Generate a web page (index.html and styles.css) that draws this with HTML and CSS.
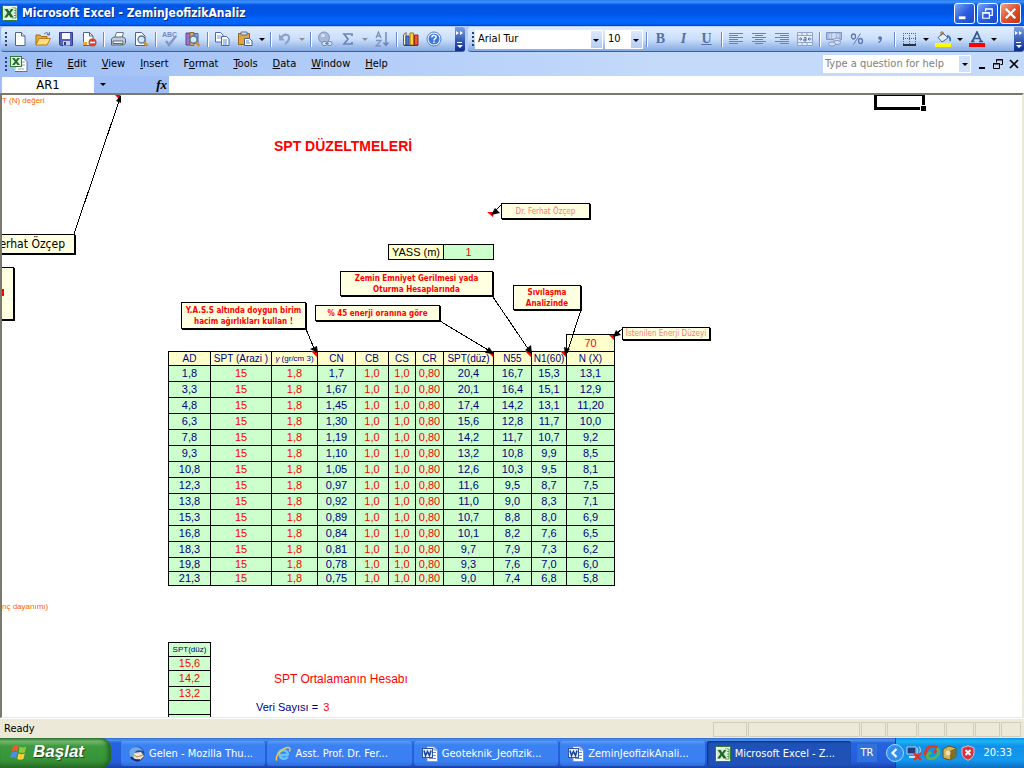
FILE: index.html
```html
<!DOCTYPE html>
<html lang="tr">
<head>
<meta charset="utf-8">
<title>Microsoft Excel - ZeminJeofizikAnaliz</title>
<link rel="stylesheet" href="styles.css">
</head>
<body>
<svg class="defs" aria-hidden="true">
  <symbol id="excel" viewBox="0 0 16 16"><rect x=".5" y=".5" width="15" height="15" rx="1" fill="#eef6ea" stroke="#2f7d32"/><path d="M10 3h4v10h-4z" fill="#fff" stroke="#4b9a4b"/><path d="M10 5.5h4M10 8h4M10 10.500h4" stroke="#4b9a4b"/><rect x="2" y="3" width="10" height="10" fill="#d6ecd0"/><path d="M2.500 4h3.200l1.600 2.400L9 4h2.500L8.600 8l3.200 4.500H8.500L6.800 9.800 5 12.500H2.200L5.400 8z" fill="#1d6b2a"/></symbol>
  <symbol id="word" viewBox="0 0 16 16"><path d="M5 .5h7l3.500 3.500v11.500H5z" fill="#fff" stroke="#7d93c4"/><path d="M12 .5V4h3.500M11 6.500h3M11 9.500h3M7 12.500h7" stroke="#6f8fd0" fill="none"/><rect x=".5" y="2.500" width="10" height="9" fill="#e7effc" stroke="#2d56a8"/><path d="M2 4.500l1.500 5 2-4 2 4 1.500-5" fill="none" stroke="#1f4598" stroke-width="1.600"/></symbol>
  <symbol id="lens" viewBox="0 0 16 16"><circle cx="8.500" cy="8.500" r="3.500" fill="#cfeafd" stroke="#5f7795" stroke-width="1.300"/><path d="M11 11.300l3.500 3.500" stroke="#d58a2c" stroke-width="2.400"/></symbol>
</svg>
<div class="app">
  <header class="titlebar">
    <svg class="i16"><use href="#excel"/></svg>
    <h1 class="caption">Microsoft Excel - ZeminJeofizikAnaliz</h1>
    <div class="winbtns">
      <button class="winbtn" aria-label="Minimize"><svg viewBox="0 0 20 20"><path d="M4 13h7v3H4z" fill="#fff"/></svg></button>
      <button class="winbtn" aria-label="Restore"><svg viewBox="0 0 20 20"><path d="M8 8V5h7v7h-3M8 5.500h7M5 9h7v6H5zM5 9.500h7" fill="none" stroke="#fff" stroke-width="1.300"/></svg></button>
      <button class="winbtn close" aria-label="Close"><svg viewBox="0 0 20 20"><path d="M5 5l10 10M15 5L5 15" stroke="#fff" stroke-width="2.400"/></svg></button>
    </div>
  </header>

  <div class="toolbars">
    <div class="toolbar">
      <span class="grip"></span>
      <button class="tb" aria-label="New"><svg viewBox="0 0 16 16"><path d="M3.500 1.500h6l3.500 3.500v9.500H3.500z" fill="#fff" stroke="#51658c"/><path d="M9.500 1.500V5H13" fill="#dbe6f6" stroke="#51658c"/></svg></button>
      <button class="tb" aria-label="Open"><svg viewBox="0 0 16 16"><path d="M1 14V4h4l1.500 1.500H12V8" fill="#e8a93a" stroke="#a36a10"/><path d="M1 14L4 7.500h11.500L12 14z" fill="#ffdc7c" stroke="#b77d1a"/><path d="M9 3c2-2 4-1.500 5 .8M14.500 1.200l-.3 3-2.400-1" fill="none" stroke="#4b6a9c"/></svg></button>
      <button class="tb" aria-label="Save"><svg viewBox="0 0 16 16"><path d="M1.500 1.500h13v13h-12l-1-1z" fill="#5561bd" stroke="#333c93"/><path d="M4 2h8v6H4z" fill="#f7f9ff"/><path d="M5 10h7v4.500H5z" fill="#c8cdea"/><path d="M6 11h2v3H6z" fill="#303a8a"/></svg></button>
      <button class="tb" aria-label="Permission"><svg viewBox="0 0 16 16"><path d="M2.500 1.500h6l3.500 3.500v9.500H2.500z" fill="#fff" stroke="#51658c"/><path d="M8.500 1.500V5H12" fill="none" stroke="#51658c"/><path d="M2 11h4v3H2z" fill="#f4a42c"/><circle cx="11.500" cy="11.500" r="4" fill="#dd4328"/><path d="M9 11.500h5" stroke="#fff" stroke-width="1.600"/></svg></button>
      <span class="sep"></span>
      <button class="tb" aria-label="Print"><svg viewBox="0 0 16 16"><path d="M5 6l1.500-4.500h7L12 7" fill="#fff" stroke="#66758f"/><path d="M1.500 8l2-2h10l2 2v4l-2 2h-12z" fill="#c4ccd8" stroke="#56657f"/><path d="M3 10h10v2.500H3z" fill="#f5f8fb" stroke="#56657f"/><path d="M11 12h2v2h-2z" fill="#37a234"/></svg></button>
      <button class="tb" aria-label="Print Preview"><svg viewBox="0 0 16 16"><path d="M2.500 1.500h6L12 5v9.500H2.500z" fill="#fff" stroke="#51658c"/><use href="#lens"/></svg></button>
      <span class="sep"></span>
      <button class="tb" aria-label="Spelling"><svg viewBox="0 0 16 16"><text x="0" y="6" class="icontext">ABC</text><path d="M4 10l3 4 7-9" fill="none" stroke="#8198c4" stroke-width="2.400"/></svg></button>
      <button class="tb" aria-label="Research"><svg viewBox="0 0 16 16"><path d="M1 2h4v12H1z" fill="#9c75bf" stroke="#65468c"/><path d="M5 1.500h4v13H5z" fill="#d3b07a" stroke="#8c6a35"/><path d="M9 2.500h4v10H9z" fill="#87a5e0" stroke="#4a64a4"/><use href="#lens"/></svg></button>
      <span class="sep"></span>
      <button class="tb" aria-label="Copy"><svg viewBox="0 0 16 16"><path d="M1.500 1.500h5L9 4v7H1.500z" fill="#fff" stroke="#4c69a8"/><path d="M3 5h4M3 7h4" stroke="#7a98d6"/><path d="M7.500 5.500h5L15 8v6.500H7.500z" fill="#fff" stroke="#4c69a8"/><path d="M9 9h4M9 11h4M9 13h4" stroke="#5e84d0"/></svg></button>
      <button class="tb" aria-label="Paste"><svg viewBox="0 0 16 16"><path d="M1.500 2.500h11v11h-11z" fill="#e6a53a" stroke="#94651a"/><path d="M4 1h6v3H4z" fill="#d7dbe4" stroke="#66758f"/><path d="M7.500 7.500h5L15 10v4.500H7.500z" fill="#fff" stroke="#4c5f8c"/><path d="M9 10h3M9 12h4" stroke="#5e84d0"/></svg></button>
      <button class="drop" aria-label="Paste options"></button>
      <span class="sep"></span>
      <button class="tb" aria-label="Undo"><svg viewBox="0 0 16 16"><path d="M4 7c3-5 9-4 8 1-.4 2-2 3.500-4 5" fill="none" stroke="#8ba2cf" stroke-width="2.200"/><path d="M2 3v6.500h6z" fill="#8ba2cf"/></svg></button>
      <button class="drop dim" aria-label="Undo list"></button>
      <span class="sep"></span>
      <button class="tb" aria-label="Insert Hyperlink"><svg viewBox="0 0 16 16"><circle cx="7" cy="6.500" r="5.500" fill="#a5b8da" stroke="#7f95be"/><path d="M4 3.500c2-1.500 4-1 4 1s-3 2-4 1z" fill="#d5e0f2"/><rect x="5" y="10.500" width="5" height="4" rx="2" fill="#dce6f7" stroke="#7488b0"/><rect x="10" y="10.500" width="5" height="4" rx="2" fill="#dce6f7" stroke="#7488b0"/><path d="M8 12.500h4" stroke="#7488b0"/></svg></button>
      <button class="tb" aria-label="AutoSum"><svg viewBox="0 0 16 16"><path d="M12 5V3H4l4 5-4 5h8v-2" fill="none" stroke="#6b84b8" stroke-width="1.700"/></svg></button>
      <button class="drop dim" aria-label="AutoSum options"></button>
      <button class="tb" aria-label="Sort Ascending"><svg viewBox="0 0 16 16"><path d="M2 7l2.500-6L7 7M3 5h3M2 9.500h5L2 15h5" fill="none" stroke="#7f95c0" stroke-width="1.300"/><path d="M12 1v13M9.500 11.500L12 14.500l2.500-3" fill="none" stroke="#6b84b8" stroke-width="1.400"/></svg></button>
      <span class="sep"></span>
      <button class="tb" aria-label="Chart Wizard"><svg viewBox="0 0 16 16"><path d="M.5 4L3 1.500V14H.5z" fill="#f9f0d0" stroke="#765d2a"/><path d="M3 5h3v9H3z" fill="#4a7dd8" stroke="#264b94"/><path d="M7 2h3.500v12H7z" fill="#ffd23b" stroke="#a37300"/><path d="M11.500 4H15v10h-3.500z" fill="#e65a38" stroke="#9c2a12"/><path d="M1 14.500h14" stroke="#444"/></svg></button>
      <button class="tb" aria-label="Help"><svg viewBox="0 0 16 16"><circle cx="8" cy="8" r="7" fill="#fff" stroke="#4b78c8"/><circle cx="8" cy="8" r="5.500" fill="#3d78dc"/><path d="M5.800 6.500c0-3 4.600-2.600 4.300-.2C10 7.800 8 7.700 8 9.500M8 10.500v1.500" fill="none" stroke="#fff" stroke-width="1.500"/></svg></button>
      <span class="fill"></span>
      <button class="more" aria-label="Toolbar Options"><svg viewBox="0 0 10 24"><path d="M1 4l3 2-3 2zM5 4l3 2-3 2z" fill="#fff"/><path d="M2 15h5v1H2zM2 18h6l-3 3z" fill="#fff"/></svg></button>
    </div>
    <div class="toolbar wide">
      <span class="grip"></span>
      <label class="combo font"><select aria-label="Font"><option>Arial Tur</option></select></label>
      <label class="combo size"><select aria-label="Font Size"><option>10</option></select></label>
      <span class="sep"></span>
      <button class="tb letter"><b>B</b></button>
      <button class="tb letter"><b><i>I</i></b></button>
      <button class="tb letter"><b><u>U</u></b></button>
      <span class="sep"></span>
      <button class="tb" aria-label="Align Left"><svg viewBox="0 0 16 16"><path d="M1 2.500h14M1 4.500h9M1 6.500h14M1 8.500h9M1 10.500h14M1 12.500h9" stroke="#6a82b4"/></svg></button>
      <button class="tb" aria-label="Center"><svg viewBox="0 0 16 16"><path d="M1 2.500h14M4 4.500h8M1 6.500h14M4 8.500h8M1 10.500h14M4 12.500h8" stroke="#6a82b4"/></svg></button>
      <button class="tb" aria-label="Align Right"><svg viewBox="0 0 16 16"><path d="M1 2.500h14M6 4.500h9M1 6.500h14M6 8.500h9M1 10.500h14M6 12.500h9" stroke="#6a82b4"/></svg></button>
      <button class="tb" aria-label="Merge and Center"><svg viewBox="0 0 16 16"><path d="M.5 1.500h15v13H.5zM.5 4.500h15M.5 11.500h15M5 1.500v3M10 1.500v3M5 11.500v3M10 11.500v3" fill="#e5edfa" stroke="#8ea5d0"/><path d="M1.500 8h3M3.500 6.500L5 8 3.500 9.500M14.500 8h-3M12.500 6.500L11 8l1.500 1.500M7 6.500h2v3.500H6.800V8.300H9" fill="none" stroke="#546fa8"/></svg></button>
      <span class="sep"></span>
      <button class="tb" aria-label="Currency"><svg viewBox="0 0 16 16"><path d="M.5 1.500h15v7H.5z" fill="#a9bbdd" stroke="#8096c2"/><path d="M4 3v4M7 3h2v4H7zM12 3v4" fill="none" stroke="#e8effa"/><ellipse cx="11" cy="9" rx="3.500" ry="2" fill="#d7e0f1" stroke="#8096c2"/><ellipse cx="11" cy="11.500" rx="3.500" ry="2" fill="#d7e0f1" stroke="#8096c2"/><ellipse cx="6" cy="13" rx="3.500" ry="2" fill="#d7e0f1" stroke="#8096c2"/></svg></button>
      <button class="tb" aria-label="Percent"><svg viewBox="0 0 16 16"><ellipse cx="4.500" cy="5.500" rx="2" ry="2.500" fill="none" stroke="#5d78b0" stroke-width="1.300"/><ellipse cx="11.500" cy="10" rx="2" ry="2.500" fill="none" stroke="#5d78b0" stroke-width="1.300"/><path d="M11.500 2.500l-7 11" stroke="#5d78b0"/></svg></button>
      <button class="tb" aria-label="Comma"><svg viewBox="0 0 16 16"><circle cx="8" cy="7" r="1.800" fill="#5570a8"/><path d="M9 7c.5 2-.5 3.500-2.500 4.500" fill="none" stroke="#5570a8" stroke-width="1.300"/></svg></button>
      <span class="sep"></span>
      <button class="tb" aria-label="Borders"><svg viewBox="0 0 16 16"><path d="M2.500 2v11M8.500 2v11M14.500 2v11M2 2.500h13M2 7.500h13" stroke="#4d6798" stroke-dasharray="1 1"/><path d="M2 14h13" stroke="#000" stroke-width="1.600"/></svg></button>
      <button class="drop" aria-label="Border styles"></button>
      <button class="tb" aria-label="Fill Color"><svg viewBox="0 0 16 16"><path d="M3 6.500L8 2l5 5-6 4z" fill="#e4eefb" stroke="#48638f"/><path d="M6 5V1h2v3" fill="none" stroke="#8b6a3c"/><path d="M12 5c3 0 3.500 3 3 5" fill="none" stroke="#3d6fc4" stroke-width="1.800"/><path d="M0 12h16v4H0z" fill="#ffff00"/></svg></button>
      <button class="drop" aria-label="Fill colors"></button>
      <button class="tb" aria-label="Font Color"><svg viewBox="0 0 16 16"><path d="M3 11L8 1l4.500 10M5 7.500h5.500M2 10.500h3.500M10 10.500h4" fill="none" stroke="#39568f" stroke-width="1.700"/><path d="M0 12h16v4H0z" fill="#ff0000"/></svg></button>
      <button class="drop" aria-label="Font colors"></button>
      <span class="fill"></span>
      <button class="more" aria-label="Toolbar Options"><svg viewBox="0 0 10 24"><path d="M1 4l3 2-3 2zM5 4l3 2-3 2z" fill="#fff"/><path d="M2 15h5v1H2zM2 18h6l-3 3z" fill="#fff"/></svg></button>
    </div>
  </div>

  <nav class="menubar">
    <span class="grip"></span>
    <svg class="bookicon" viewBox="0 0 18 16"><path d="M8 2.500h6l3 3v10H5" fill="#fff" stroke="#5b6f99"/><path d="M12 6h3M12 9h3M8 13h6" stroke="#8c9dbf"/><rect x=".5" y=".5" width="11" height="10" fill="#e3f3dd" stroke="#2f7d32"/><path d="M2 2h2.500L6 4l1.500-2H10L7.200 5.500 10 9H7.500L6 7 4.500 9H2l2.800-3.500z" fill="#1d6b2a"/></svg>
    <button class="menu"><u>F</u>ile</button>
    <button class="menu"><u>E</u>dit</button>
    <button class="menu"><u>V</u>iew</button>
    <button class="menu"><u>I</u>nsert</button>
    <button class="menu">F<u>o</u>rmat</button>
    <button class="menu"><u>T</u>ools</button>
    <button class="menu"><u>D</u>ata</button>
    <button class="menu"><u>W</u>indow</button>
    <button class="menu"><u>H</u>elp</button>
    <span class="fill"></span>
    <label class="question"><input type="text" placeholder="Type a question for help" aria-label="Type a question for help"><button class="drop qdrop" aria-label="Recent questions"></button></label>
    <button class="docbtn" aria-label="Minimize workbook"><svg viewBox="0 0 12 12"><path d="M3 9h6v2H3z"/></svg></button>
    <button class="docbtn" aria-label="Restore workbook"><svg viewBox="0 0 12 12"><path d="M4.500 4.500v-3h6v5h-2M4 2h7M1.500 5.500h6v5h-6zM1 6h7" fill="none" stroke="#000"/></svg></button>
    <button class="docbtn" aria-label="Close workbook"><svg viewBox="0 0 12 12"><path d="M2 2l8 8M10 2l-8 8" stroke="#000" stroke-width="1.700"/></svg></button>
  </nav>

  <div class="formulabar">
    <input class="namebox" type="text" value="AR1" aria-label="Name Box">
    <button class="drop namedrop" aria-label="Names"></button>
    <button class="fx" aria-label="Insert Function"><i>fx</i></button>
    <input class="formula" type="text" aria-label="Formula">
  </div>

  <main class="sheet">
    <h2 class="heading">SPT DÜZELTMELERİ</h2>
    <table class="grid yass"><tr><th>YASS (m)</th><td class="r">1</td></tr></table>
    <table class="grid main">
      <colgroup><col class="c42"><col class="c61"><col class="c46"><col class="c38"><col class="c33"><col class="c27"><col class="c28"><col class="c50"><col class="c38"><col class="c35"><col class="c48"></colgroup>
      <thead>
        <tr class="energy"><td class="none" colspan="10"></td><th class="r">70</th></tr>
        <tr class="short head"><th>AD</th><th>SPT (Arazi )</th><th class="small"><i>γ</i> (gr/cm 3)</th><th>CN</th><th>CB</th><th>CS</th><th>CR</th><th>SPT(düz)</th><th>N55</th><th>N1(60)</th><th>N (X)</th></tr>
      </thead>
      <tbody>
        <tr><td>1,8</td><td class="r">15</td><td class="r">1,8</td><td>1,7</td><td class="r">1,0</td><td class="r">1,0</td><td class="r">0,80</td><td>20,4</td><td>16,7</td><td>15,3</td><td>13,1</td></tr>
        <tr><td>3,3</td><td class="r">15</td><td class="r">1,8</td><td>1,67</td><td class="r">1,0</td><td class="r">1,0</td><td class="r">0,80</td><td>20,1</td><td>16,4</td><td>15,1</td><td>12,9</td></tr>
        <tr><td>4,8</td><td class="r">15</td><td class="r">1,8</td><td>1,45</td><td class="r">1,0</td><td class="r">1,0</td><td class="r">0,80</td><td>17,4</td><td>14,2</td><td>13,1</td><td>11,20</td></tr>
        <tr><td>6,3</td><td class="r">15</td><td class="r">1,8</td><td>1,30</td><td class="r">1,0</td><td class="r">1,0</td><td class="r">0,80</td><td>15,6</td><td>12,8</td><td>11,7</td><td>10,0</td></tr>
        <tr><td>7,8</td><td class="r">15</td><td class="r">1,8</td><td>1,19</td><td class="r">1,0</td><td class="r">1,0</td><td class="r">0,80</td><td>14,2</td><td>11,7</td><td>10,7</td><td>9,2</td></tr>
        <tr><td>9,3</td><td class="r">15</td><td class="r">1,8</td><td>1,10</td><td class="r">1,0</td><td class="r">1,0</td><td class="r">0,80</td><td>13,2</td><td>10,8</td><td>9,9</td><td>8,5</td></tr>
        <tr><td>10,8</td><td class="r">15</td><td class="r">1,8</td><td>1,05</td><td class="r">1,0</td><td class="r">1,0</td><td class="r">0,80</td><td>12,6</td><td>10,3</td><td>9,5</td><td>8,1</td></tr>
        <tr><td>12,3</td><td class="r">15</td><td class="r">1,8</td><td>0,97</td><td class="r">1,0</td><td class="r">1,0</td><td class="r">0,80</td><td>11,6</td><td>9,5</td><td>8,7</td><td>7,5</td></tr>
        <tr><td>13,8</td><td class="r">15</td><td class="r">1,8</td><td>0,92</td><td class="r">1,0</td><td class="r">1,0</td><td class="r">0,80</td><td>11,0</td><td>9,0</td><td>8,3</td><td>7,1</td></tr>
        <tr><td>15,3</td><td class="r">15</td><td class="r">1,8</td><td>0,89</td><td class="r">1,0</td><td class="r">1,0</td><td class="r">0,80</td><td>10,7</td><td>8,8</td><td>8,0</td><td>6,9</td></tr>
        <tr><td>16,8</td><td class="r">15</td><td class="r">1,8</td><td>0,84</td><td class="r">1,0</td><td class="r">1,0</td><td class="r">0,80</td><td>10,1</td><td>8,2</td><td>7,6</td><td>6,5</td></tr>
        <tr><td>18,3</td><td class="r">15</td><td class="r">1,8</td><td>0,81</td><td class="r">1,0</td><td class="r">1,0</td><td class="r">0,80</td><td>9,7</td><td>7,9</td><td>7,3</td><td>6,2</td></tr>
        <tr class="short"><td>19,8</td><td class="r">15</td><td class="r">1,8</td><td>0,78</td><td class="r">1,0</td><td class="r">1,0</td><td class="r">0,80</td><td>9,3</td><td>7,6</td><td>7,0</td><td>6,0</td></tr>
        <tr class="short"><td>21,3</td><td class="r">15</td><td class="r">1,8</td><td>0,75</td><td class="r">1,0</td><td class="r">1,0</td><td class="r">0,80</td><td>9,0</td><td>7,4</td><td>6,8</td><td>5,8</td></tr>
      </tbody>
    </table>
    <section class="average">
      <table class="grid avg">
        <tr class="short"><th class="small">SPT(düz)</th></tr>
        <tr class="short"><td class="r">15,6</td></tr>
        <tr><td class="r">14,2</td></tr>
        <tr class="short"><td class="r">13,2</td></tr>
        <tr class="short"><td></td></tr>
        <tr class="short"><td></td></tr>
      </table>
      <div class="avgtext">
        <h3 class="subheading">SPT Ortalamanın Hesabı</h3>
        <p class="count">Veri Sayısı = <span class="r">3</span></p>
      </div>
    </section>

    <span class="cut cut-n">T (N) değeri</span>
    <span class="cut cut-d">nç dayanımı)</span>
    <div class="selection"></div>
    <div class="note n-author">erhat Özçep</div>
    <div class="note n-edge"></div>
    <div class="note pale n-ferhat">Dr. Ferhat Özçep</div>
    <div class="note n-zemin">Zemin Emniyet Gerilmesi yada Oturma Hesaplarında</div>
    <div class="note n-sivi">Sıvılaşma Analizinde</div>
    <div class="note n-yass">Y.A.S.S altında doygun birim hacim ağırlıkları kullan !</div>
    <div class="note n-enerji">% 45 enerji oranına göre</div>
    <div class="note pale n-duzey">İstenilen Enerji Düzeyi</div>
    <svg class="links" viewBox="2 95 720 280" aria-hidden="true">
      <g fill="#f00"><path d="M115 95h5v5zM487 212h7l-1 5zM311 351h6v6zM487 351h6v6zM525 351h6v6zM560 351h6v6zM609 335h5v5z"/><path d="M2 289h2v7H2z"/></g>
      <g stroke="#000" fill="none" shape-rendering="crispEdges"><path d="M74 234L120 98M501 205l-7 7M306 329l10 24M440 321l53 32M493 297l38 56M581 310l-14 43M622 329l-7 6"/></g>
      <path d="M121 95l-5 6 5 2zM491 215l4-7 5 5zM318 353l-8-4 7-3zM494 354l-9-1 4-6zM532 354l-7-4 6-5zM565 355l-1-8 6 2zM613 337l3-7 5 5z"/>
    </svg>
  </main>

  <footer class="status">
    <span class="ready">Ready</span>
    <span class="pane p34"></span><span class="pane p112"></span><span class="pane p25"></span><span class="pane p30"></span><span class="pane p27"></span><span class="pane p28"></span><span class="pane p25"></span><span class="pane p20"></span>
  </footer>

  <div class="taskbar">
    <button class="start"><svg viewBox="0 0 18 18"><path d="M3 3c2-1.500 4-1.500 5.500 0L7.500 8.500C6 7.200 4 7.200 1.800 8.500z" fill="#f0592a"/><path d="M9.700 3.500c2 1.300 4 1.300 6.500 0L15 9c-2 1.300-4.500 1.200-6.200 0z" fill="#8ccc3c"/><path d="M1.500 9.800c2-1.300 4-1.300 5.800 0L6 15.300c-1.800-1.300-3.600-1.300-5.800 0z" fill="#4a8df0"/><path d="M8.500 10.300c2 1.300 4 1.300 6.300 0l-1.300 5.500c-2 1.300-4.400 1.300-6.200 0z" fill="#fccf3a"/></svg>Başlat</button>
    <div class="tasks">
      <button class="task"><svg class="i16" viewBox="0 0 16 16"><circle cx="8" cy="8" r="7.500" fill="#244f9c"/><path d="M4 7l8-1 3 4-5 5-6-3z" fill="#f0e3cb"/><path d="M4 8l4 3 6-2" fill="none" stroke="#ad8356"/><path d="M1 4c3-4 10-4 13 1-5-2-8 0-9 3s0 5 3 7C2 15-1 9 1 4z" fill="#6eaae6"/><path d="M2 11c2 3 5 4 9 3" fill="none" stroke="#17306b" stroke-width="2"/></svg><span>Gelen - Mozilla Thu...</span></button>
      <button class="task"><svg class="i16" viewBox="0 0 16 16"><path d="M13.500 9H5c0 4 5 5 7.500 2" fill="none" stroke="#64c5fa" stroke-width="2.600"/><path d="M3.500 9c-.5-6 9-7 9.500 0" fill="none" stroke="#64c5fa" stroke-width="2.600"/><path d="M2 14.500C-1 11 8 1 13.500 1.500c2 .2 1.500 2.500.8 4" fill="none" stroke="#fbc63a" stroke-width="1.500"/></svg><span>Asst. Prof. Dr. Fer...</span></button>
      <button class="task"><svg class="i16"><use href="#word"/></svg><span>Geoteknik_Jeofizik...</span></button>
      <button class="task"><svg class="i16"><use href="#word"/></svg><span>ZeminJeofizikAnali...</span></button>
      <button class="task active"><svg class="i16"><use href="#excel"/></svg><span>Microsoft Excel - Z...</span></button>
    </div>
    <span class="lang">TR</span>
    <div class="tray">
      <button class="expand" aria-label="Show hidden icons"><svg viewBox="0 0 18 18"><circle cx="9" cy="9" r="8.500" fill="#2f8ff0" stroke="#a8d6ff"/><path d="M10.500 5L6.500 9l4 4" fill="none" stroke="#fff" stroke-width="2.200"/></svg></button>
      <svg class="i16" viewBox="0 0 16 16"><path d="M1 2h9v7H1z" fill="#243c80" stroke="#c4cee2"/><path d="M3 12h6" stroke="#d9e0ee" stroke-width="2"/><path d="M11 3c1 2 1 3 0 5M13 1.500c2 3 1.500 5 0 8" fill="none" stroke="#dce9fa"/><path d="M8 8l7 7M15 8l-7 7" stroke="#e03026" stroke-width="2"/></svg>
      <svg class="i16" viewBox="0 0 16 16"><path d="M4 13C-2 9 3 0 11 1.500c3 1 2 3-1 6.500" fill="none" stroke="#e0392c" stroke-width="2.800"/><path d="M13 3c5 6-3 13-9 10-2-2 0-4 3-6" fill="none" stroke="#55b848" stroke-width="2.800"/></svg>
      <svg class="i16" viewBox="0 0 16 16"><path d="M1 4l6-3 7 2v9l-6 3-7-2z" fill="#d0b45a" stroke="#655019"/><path d="M8 6l6-3v9l-6 3z" fill="#7d702c"/><circle cx="6" cy="8" r="2.500" fill="#f2dda0"/></svg>
      <svg class="i16" viewBox="0 0 16 16"><path d="M8 .8l6 2v5c0 4-3 6-6 7.500C5 13.800 2 11.800 2 7.800v-5z" fill="#d9303e" stroke="#f1bcc0"/><path d="M5.500 5l5 5M10.500 5l-5 5" stroke="#fff" stroke-width="2"/></svg>
      <time class="clock">20:33</time>
    </div>
  </div>
</div>
</body>
</html>
```

FILE: styles.css
```css
* { box-sizing: border-box; }
html, body { height: 100%; }
body { margin: 0; font: 11px/14px "DejaVu Sans Condensed", "Noto Sans", sans-serif; color: #000; }
button, input, select { font: inherit; color: inherit; border: 0; margin: 0; padding: 0; background: none; border-radius: 0; }
input, select { min-width: 0; outline: 0; }
h1, h2, h3, p { margin: 0; }
svg { display: block; }
.defs { display: none; }
.i16 { width: 16px; height: 16px; flex: none; }
.fill { flex: 1; }
.app { min-height: 100vh; display: flex; flex-direction: column; overflow: hidden; }

.titlebar { height: 26px; flex: none; display: flex; align-items: center; padding: 0 3px 0 2px; gap: 4px; color: #fff;
  background: linear-gradient(#2a7cf0 0, #3c93ff 2px, #0054e0 5px, #0055e6 14px, #0066ff 20px, #0062f5 24px, #0040c4 26px); }
.caption { flex: 1; font: bold 13px/18px "Noto Sans", sans-serif; font-family: "DejaVu Sans Condensed", sans-serif; font-size: 12px; text-shadow: 1px 1px #0a2a80; }
.winbtns { display: flex; gap: 2px; }
.winbtn { width: 21px; height: 21px; border: 1px solid #fff; border-radius: 3px; background: linear-gradient(135deg, #7ea6f5, #2a5fe0 50%, #1b48c8); }
.winbtn svg { width: 19px; height: 19px; }
.winbtn.close { background: linear-gradient(135deg, #f0a58c, #e0512c 50%, #c03510); }

.toolbars { height: 26px; flex: none; display: flex; gap: 3px; padding: 1px 0 0 1px; background: linear-gradient(90deg, #9ebef5, #c4dafa); }
.toolbar { display: flex; align-items: center; height: 25px; width: 464px; flex: none; border-radius: 3px; overflow: hidden;
  background: linear-gradient(#e0edff, #cbdffb 50%, #84a9e2); border-bottom: 1px solid #3b619c; }
.toolbar.wide { width: auto; flex: 1; }
.grip { width: 7px; height: 15px; flex: none; background: repeating-linear-gradient(#27417b 0 2px, transparent 2px 4px) 4px 0 / 2px 15px no-repeat; }
.tb { width: 23px; height: 22px; flex: none; display: flex; align-items: center; justify-content: center; }
.tb svg { width: 16px; height: 16px; }
.icontext { font: bold 7px "Liberation Sans", sans-serif; fill: #738bbc; }
.letter { font: 14px/20px "Liberation Serif", serif; color: #5570a8; }
.sep { width: 6px; height: 15px; flex: none; background: linear-gradient(90deg, #6a8ccb 50%, #fff 50%) 3px 0 / 2px 15px no-repeat; }
.drop { width: 11px; height: 18px; flex: none; display: flex; align-items: center; justify-content: center; }
.drop::before, .combo::after { content: ""; border: 3px solid transparent; border-top-color: #000; border-bottom: 0; }
.drop.dim::before { border-top-color: #8a9099; }
.more { width: 10px; height: 24px; flex: none; background: linear-gradient(#7ba0e4, #3b62b8 50%, #0a2d8c); }
.more svg { width: 10px; height: 24px; }
.combo { display: flex; align-items: center; height: 19px; background: #fff; border: 1px solid #fff; position: relative; }
.combo select { appearance: none; width: 100%; height: 17px; padding: 0 2px; background: linear-gradient(#dce9fd, #b4cdf4) right / 11px 17px no-repeat; }
.combo::after { position: absolute; right: 3px; top: 8px; pointer-events: none; }
.combo.font { width: 128px; }
.combo.size { width: 38px; margin-left: 2px; }

.menubar { height: 24px; flex: none; display: flex; align-items: center; padding: 0 2px 0 1px; background: linear-gradient(90deg, #9ebef5, #c4dafa 65%); }
.bookicon { width: 18px; height: 16px; margin: 0 0 0 2px; }
.menu { padding: 0 7px 0 8px; line-height: 18px; }
.question { display: flex; align-items: center; width: 148px; height: 18px; background: #fff; margin-right: 3px; }
.question input { flex: 1; padding: 0 2px; }
.question input::placeholder { color: #808080; opacity: 1; }
.qdrop { width: 11px; height: 16px; margin-right: 1px; background: #cfe0fa; }
.docbtn { width: 16px; height: 16px; display: flex; align-items: center; justify-content: center; }
.docbtn svg { width: 12px; height: 12px; }

.formulabar { height: 17px; flex: none; display: flex; align-items: center; padding-left: 2px; background: #9ebef5; }
.namebox { width: 92px; height: 16px; background: #fff; text-align: center; font-size: 13px; }
.namedrop { width: 18px; }
.fx { width: 57px; padding-right: 2px; text-align: right; font: bold 13px/16px "Liberation Serif", serif; }
.formula { flex: 1; height: 17px; background: #fff; padding: 0 4px; }

.sheet { flex: 1 0 624px; position: relative; overflow: hidden; padding-left: 166px; background: #fff; font-family: "Liberation Sans", Arial, sans-serif;
  border: 2px solid #7b786c; border-right-color: #ece9d8; border-bottom: 1px solid #ece9d8; }
.heading { padding: 42px 0 0 106px; font-size: 14px; line-height: 18px; color: #f00; }
.grid { border-collapse: collapse; table-layout: fixed; color: #000080; text-align: center; font-size: 11px; line-height: 13px; }
.grid th, .grid td { height: 16px; padding: 0; border: 1px solid #000; font-weight: normal; white-space: nowrap; background: #ccffcc; }
.grid th { background: #ffffcc; }
.grid .none { border: 0; background: none; }
.grid .short th, .grid .short td { height: 14px; }
.grid .head th { font-size: 10px; }
.grid .small, .grid .head .small { font-size: 8px; }
.r, .grid .r { color: #f00; }
.yass { width: 106px; margin: 89px 0 0 220px; color: #000; }
.yass th, .grid.yass td { height: 15px; }
.yass th { width: 55px; }
.main { width: 447px; margin-top: 74px; }
.energy { height: 17px; }
.c27 { width: 27px; } .c28 { width: 28px; } .c33 { width: 33px; } .c35 { width: 35px; } .c38 { width: 38px; } .c42 { width: 42px; }
.c46 { width: 46px; } .c48 { width: 48px; } .c50 { width: 50px; } .c61 { width: 61px; }
.average { display: flex; align-items: flex-start; margin-top: 56px; height: 76px; }
.avg { width: 43px; flex: none; }
.grid.avg th { background: #ccffcc; }
.avgtext { padding: 28px 0 0 45px; }
.subheading { font: 12px/18px "Liberation Sans", sans-serif; color: #f00; padding-left: 18px; }
.count { margin-top: 12px; color: #000080; font-size: 11px; line-height: 14px; }
.count .r { padding-left: 2px; }

.cut { position: absolute; left: 0; font-size: 8px; line-height: 10px; color: #ff6600; white-space: nowrap; }
.cut-n { top: 1px; }
.cut-d { top: 507px; }
.selection { position: absolute; left: 872px; top: -2px; width: 51px; height: 17px; border: 3px solid #000; }
.selection::after { content: ""; position: absolute; right: -4px; bottom: -4px; width: 5px; height: 5px; background: #000; outline: 1px solid #fff; }
.note { position: absolute; display: flex; align-items: center; justify-content: center; text-align: center; padding: 0 4px;
  background: #ffffe1; border: 1px solid #000; box-shadow: 1px 1px #000; color: #f00; font: bold 8px/11px "DejaVu Sans Condensed", sans-serif; }
.note.pale { font-weight: normal; color: #ff7a6a; padding: 0; white-space: nowrap; }
.n-author { left: -1px; top: 139px; width: 74px; height: 20px; padding: 0 9px 0 0; justify-content: flex-end; color: #000; font: 12px/16px "DejaVu Sans Condensed", sans-serif; white-space: nowrap; }
.n-edge { left: -1px; top: 172px; width: 13px; height: 53px; }
.n-ferhat { left: 499px; top: 108px; width: 89px; height: 16px; }
.n-zemin { left: 338px; top: 176px; width: 153px; height: 25px; padding: 0 12px; }
.n-sivi { left: 511px; top: 190px; width: 68px; height: 25px; }
.n-yass { left: 179px; top: 207px; width: 125px; height: 27px; padding: 0 2px; }
.n-enerji { left: 313px; top: 210px; width: 125px; height: 16px; }
.n-duzey { left: 620px; top: 232px; width: 88px; height: 13px; }
.links { position: absolute; left: 0; top: 0; width: 720px; height: 280px; pointer-events: none; }

.status { height: 20px; flex: none; display: flex; align-items: center; gap: 1px; padding: 2px 3px 1px 4px; background: #ece9d8; border-top: 1px solid #fff; }
.ready { flex: 1; }
.pane { height: 15px; border: 1px solid #d0cdbf; }
.p20 { width: 20px; } .p25 { width: 25px; } .p27 { width: 27px; } .p28 { width: 28px; } .p30 { width: 30px; } .p34 { width: 34px; } .p112 { width: 112px; }

.taskbar { height: 30px; flex: none; display: flex; align-items: stretch; color: #fff; background: linear-gradient(#3168d5 0, #4993e6 2px, #2663e0 5px, #245ddb 24px, #1941a5 30px); }
.start { width: 111px; flex: none; display: flex; align-items: center; gap: 5px; padding: 0 0 2px 10px; border-radius: 0 10px 10px 0;
  background: linear-gradient(#387e38 0, #78bd74 3px, #3f9a3f 8px, #379437 22px, #2a6f2a 30px); box-shadow: inset -3px 0 4px #1f6420;
  font: italic bold 17px/24px "Liberation Sans", sans-serif; text-shadow: 1px 1px 1px #1c451c; }
.start svg { width: 18px; height: 18px; }
.tasks { flex: 1; display: flex; gap: 2px; padding: 3px 6px 2px 10px; min-width: 0; }
.task { flex: 1; min-width: 0; max-width: 145px; display: flex; align-items: center; gap: 4px; padding: 0 0 0 8px; border-radius: 3px; white-space: nowrap;
  background: linear-gradient(#5a9bff, #3c81f0 4px, #3b80f3 20px, #2f6cd8); }
.task.active { background: #1e52b7; box-shadow: inset 1px 1px 2px #0c2f80; }
.lang { align-self: center; width: 20px; line-height: 18px; text-align: center; background: #3172d8; margin-right: 18px; }
.tray { display: flex; align-items: center; gap: 2px; width: 129px; flex: none; padding-right: 12px; border-left: 1px solid #1042af; background: linear-gradient(#0d8eea 0, #19b9f3 3px, #1290e9 8px, #1399ee 22px, #0f6cc0 30px); }
.expand { width: 18px; height: 18px; margin-left: -10px; flex: none; }
.clock { flex: 1; text-align: right; }
```
